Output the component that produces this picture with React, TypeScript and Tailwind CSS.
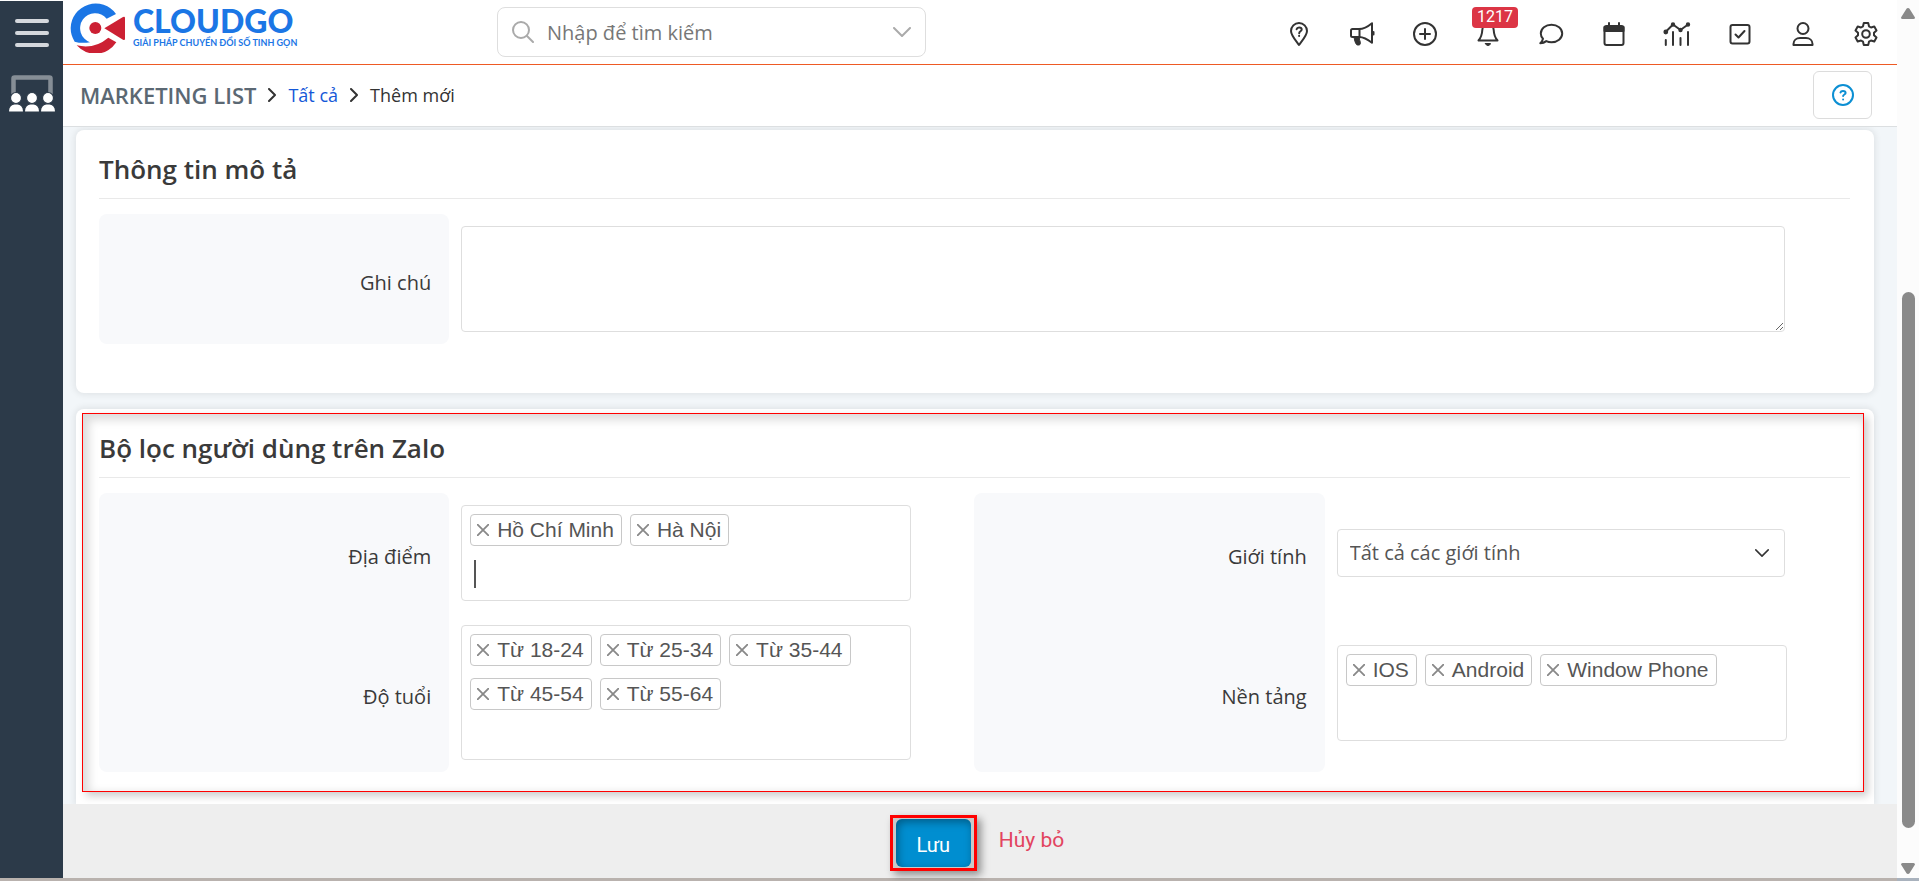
import type { ReactNode } from "react";

const stroke = {
  fill: "none",
  stroke: "currentColor",
  strokeWidth: 2,
  strokeLinecap: "round" as const,
  strokeLinejoin: "round" as const,
};

function Icon({ children }: { children: ReactNode }) {
  return (
    <svg className="size-6 overflow-visible" viewBox="0 0 24 24" {...stroke} aria-hidden="true">
      {children}
    </svg>
  );
}

const tools: { label: string; icon: ReactNode; badge?: string }[] = [
  {
    label: "Vị trí",
    icon: (
      <>
        <path d="M12 23C9.500 19.500 4 13.500 4 9a8 8 0 0 1 16 0c0 4.500-5.500 10.500-8 14Z" />
        <path d="M9.600 7.300c.3-1.300 1.200-1.800 2.500-1.800 1.500 0 2.600.8 2.600 2.100 0 1.700-2.500 1.700-2.500 3.600M12.100 13.800v.2" />
      </>
    ),
  },
  {
    label: "Chiến dịch",
    icon: (
      <>
        <path d="M2.500 7H9c5 0 9-2.500 13-5.800v19.600C18 17.500 14 15 9 15H2.500a1.500 1.500 0 0 1-1.500-1.500v-5A1.500 1.500 0 0 1 2.500 7Z" />
        <path d="M9.500 7v8" />
        <path d="M4 15h5.500c-1 3 2 5 .5 7.500-1 .8-2.500.6-3.200.3C5 21 4.500 18 4 15Z" fill="currentColor" strokeWidth="1" />
        <path d="M23.500 10v2.500" />
      </>
    ),
  },
  {
    label: "Tạo nhanh",
    icon: (
      <>
        <circle cx="12" cy="12" r="11" />
        <path d="M12 7v10M7 12h10" />
      </>
    ),
  },
  {
    label: "Thông báo",
    badge: "1217",
    icon: (
      <>
        <path d="M12 2C8 2 6.500 5 6.300 8c-.2 4-.8 7-3.800 10.500h19C18.500 15 17.900 12 17.700 8 17.500 5 16 2 12 2Z" />
        <path d="M9.500 21.500h5c-.3 1.300-1.200 2-2.500 2s-2.200-.7-2.500-2Z" fill="currentColor" strokeWidth="1" />
      </>
    ),
  },
  {
    label: "Tin nhắn",
    icon: (
      <path d="M12.500 2.800c6 0 10.700 3.900 10.700 8.700s-4.700 8.700-10.700 8.700c-1.900 0-3.700-.4-5.200-1.100-1.800 1.400-3.700 2-6 2.100 1.400-1.300 2.300-2.800 2.700-4.500-1.400-1.400-2.200-3.200-2.200-5.200 0-4.800 4.700-8.700 10.700-8.700Z" />
    ),
  },
  {
    label: "Lịch",
    icon: (
      <>
        <rect x="2.500" y="4" width="19" height="19" rx="2" />
        <path d="M2.500 5h19v4h-19Z" fill="currentColor" />
        <path d="M7 1v3M17 1v3" />
      </>
    ),
  },
  {
    label: "Báo cáo",
    icon: (
      <>
        <path d="M.5 10 8 2.500l7.500 5.500L23 2.500" />
        <circle cx=".8" cy="10" r="1.400" fill="currentColor" />
        <circle cx="8" cy="2.500" r="1.200" fill="currentColor" />
        <circle cx="15.500" cy="8" r="1.200" fill="currentColor" />
        <circle cx="23" cy="2.500" r="1.200" fill="currentColor" />
        <path d="M.8 18v5M8 10v13M15.500 16v7M23 10v13" />
      </>
    ),
  },
  {
    label: "Công việc",
    icon: (
      <>
        <rect x="2.500" y="3" width="19" height="18.500" rx="2" />
        <path d="m7.500 12.500 3 3 6-6.500" />
      </>
    ),
  },
  {
    label: "Tài khoản",
    icon: (
      <>
        <circle cx="12" cy="6.500" r="5.500" />
        <path d="M2.500 23v-1c0-3.600 2.900-6 6.500-6h6c3.600 0 6.500 2.400 6.500 6v1Z" />
      </>
    ),
  },
  {
    label: "Cài đặt",
    icon: (
      <>
        <circle cx="12" cy="12" r="3.800" />
        <path d="M9.800 1h4.400l.8 3.300 2 1.200 3.300-1 2.200 3.900-2.500 2.300v2.600l2.500 2.300-2.200 3.900-3.300-1-2 1.200-.8 3.300H9.800L9 19.700l-2-1.200-3.300 1-2.200-3.900L4 13.300v-2.600L1.500 8.400l2.200-3.900 3.300 1 2-1.200Z" />
      </>
    ),
  },
];

function Logo() {
  return (
    <a href="#" className="flex items-start gap-2 pt-[3px] pl-[7px] font-['Lato',sans-serif] text-[#1b76e5]">
      <svg className="h-[50px] w-[55px]" viewBox="0 0 165 150" aria-hidden="true">
        <path
          fill="#1b76e5"
          d="M138 33A75 75 0 0 0 2 75 75 75 0 0 0 14 116Q34 122 60 118A45 45 0 1 1 110 47Z"
        />
        <path fill="#cc2033" d="M20 127Q72 140 115 104L139 118A75 75 0 0 1 20 127Z" />
        <circle cx="76" cy="75" r="18" fill="#cc2033" />
        <path fill="#cc2033" d="M103 76 159 42q6-3 6 3v62q0 6-6 3Z" />
      </svg>
      <span className="flex flex-col">
        <span className="pt-px text-[32px] leading-[34px] font-black">CLOUDGO</span>
        <span className="text-[9px] leading-[10px] font-bold whitespace-nowrap">GIẢI PHÁP CHUYỂN ĐỔI SỐ TINH GỌN</span>
      </span>
    </a>
  );
}

function Chevron({ className }: { className: string }) {
  return (
    <svg className={className} viewBox="0 0 18 10" {...stroke} aria-hidden="true">
      <path d="m1 1 8 8 8-8" />
    </svg>
  );
}

function Separator() {
  return (
    <svg className="h-[14px] w-2" viewBox="0 0 8 14" {...stroke} aria-hidden="true">
      <path d="m1 1 6 6-6 6" />
    </svg>
  );
}

function Label({ id, children, shape = "" }: { id: string; children: ReactNode; shape?: string }) {
  return (
    <label
      htmlFor={id}
      className={`flex items-center justify-end bg-[#f8f9fb] pt-2 pr-[18px] text-xl text-[#3a3a3a] ${shape}`}
    >
      {children}
    </label>
  );
}

function TagField({ id, tags, size, focused }: { id: string; tags: string[]; size: string; focused?: boolean }) {
  return (
    <div
      className={`flex w-full flex-wrap content-start gap-x-2 gap-y-3 rounded border border-[#dedede] bg-white p-2 font-['Liberation_Sans',Arial,sans-serif] text-[21px] text-[#555] ${size}`}
    >
      {tags.map((tag) => (
        <span key={tag} className="flex h-8 items-center gap-2 rounded border border-[#c8c8c8] pr-[7px] pl-[6px]">
          <button type="button" aria-label={`Xóa ${tag}`} className="text-[#888]">
            <svg className="size-3" viewBox="0 0 12 12" fill="none" stroke="currentColor" strokeWidth="1.8" aria-hidden="true">
              <path d="M0 0 12 12M12 0 0 12" />
            </svg>
          </button>
          {tag}
        </span>
      ))}
      <span className="flex h-8 basis-full items-center pl-1">
        {focused && <span className="h-7 w-[2px] bg-[#555]" />}
        <input id={id} className="w-8 bg-transparent outline-none" />
      </span>
    </div>
  );
}

function Title({ children }: { children: ReactNode }) {
  return (
    <h2 className="h-16 border-b border-[#e9e9e9] pt-[18px] text-[26px] leading-8 font-semibold text-[#3a3a3a]">
      {children}
    </h2>
  );
}

export default function App() {
  return (
    <div className="flex min-h-screen bg-white font-['Open_Sans','Noto_Sans',sans-serif] text-[#333]">
      <nav className="mt-px flex w-[63px] shrink-0 flex-col items-center border-b-[3px] border-[#b9b2ae] bg-[#2c3a49] pt-[18px]">
        <button type="button" aria-label="Menu" className="text-[#d5d8dd]">
          <svg className="h-7 w-[34px]" viewBox="0 0 34 28" fill="currentColor" aria-hidden="true">
            <rect width="34" height="4" rx="2" />
            <rect y="12" width="34" height="4" rx="2" />
            <rect y="24" width="34" height="4" rx="2" />
          </svg>
        </button>
        <a href="#" aria-label="Khách hàng" className="mt-7">
          <svg className="h-[37px] w-[46px]" viewBox="0 0 46 37" aria-hidden="true">
            <path d="M4.500 19V3.500q0-1 1-1h35q1 0 1 1V19" fill="none" stroke="#868e96" strokeWidth="4.500" />
            <g fill="#fff" stroke="#2c3a49" strokeWidth="1.200">
              <circle cx="7" cy="23" r="5.500" />
              <circle cx="23" cy="23" r="5.500" />
              <circle cx="39" cy="23" r="5.500" />
              <path d="M-.5 37v-1.500c0-4 3-6.500 6-6.500h3c3 0 6 2.500 6 6.500V37ZM15.500 37v-1.500c0-4 3-6.500 6-6.500h3c3 0 6 2.500 6 6.500V37ZM31.500 37v-1.500c0-4 3-6.500 6-6.500h3c3 0 6 2.500 6 6.500V37Z" />
            </g>
          </svg>
        </a>
      </nav>

      <div className="flex min-w-0 flex-1 flex-col border-b-[3px] border-[#b9b2ae]">
        <header className="flex h-[65px] shrink-0 items-start border-b border-[#ee5a24]">
          <div className="w-[434px] shrink-0">
            <Logo />
          </div>
          <div className="mt-[7px] flex h-[50px] w-[429px] items-center gap-[13px] rounded-lg border border-[#dedede] px-[14px] text-[#aaa]">
            <svg className="size-[22px] shrink-0" viewBox="0 0 22 22" {...stroke} aria-hidden="true">
              <circle cx="9" cy="9" r="8" />
              <path d="m15 15 6 6" />
            </svg>
            <input
              aria-label="Nhập để tìm kiếm"
              placeholder="Nhập để tìm kiếm"
              className="min-w-0 flex-1 pt-px text-xl outline-none placeholder:text-[#777]"
            />
            <Chevron className="h-[10px] w-[18px] shrink-0" />
          </div>
          <div className="ml-auto flex h-full">
            {tools.map((tool) => (
              <button
                key={tool.label}
                type="button"
                aria-label={tool.label}
                className="relative flex w-[63px] items-start justify-center pt-[22px]"
              >
                <Icon>{tool.icon}</Icon>
                {tool.badge && (
                  <span className="absolute top-[7px] left-4 h-[21px] rounded bg-[#dc3545] px-[5px] font-['Roboto',sans-serif] text-base leading-5 text-white">
                    {tool.badge}
                  </span>
                )}
              </button>
            ))}
          </div>
        </header>

        <div className="flex h-[62px] shrink-0 items-center gap-3 border-b border-[#dcdfe1] pr-[25px] pb-px pl-[17px] text-[18px]">
          <h1 className="text-[22px] font-semibold text-[#5b6873]">MARKETING LIST</h1>
          <Separator />
          <a href="#" className="text-[#1458d8]">
            Tất cả
          </a>
          <Separator />
          <span>Thêm mới</span>
          <button
            type="button"
            aria-label="Trợ giúp"
            className="ml-auto flex h-12 w-[59px] items-center justify-center rounded-md border border-[#dcdcdc] text-[#0c8fd3]"
          >
            <svg className="size-[22px]" viewBox="0 0 22 22" {...stroke} aria-hidden="true">
              <circle cx="11" cy="11" r="10" />
              <path d="M8.500 8.500C8.800 7.300 9.700 7 11 7c1.500 0 2.600.6 2.600 1.900 0 1.700-2.500 1.500-2.500 3.200M11.100 15.400v.2" />
            </svg>
          </button>
        </div>

        <main className="flex flex-1 flex-col gap-4 overflow-hidden bg-[#f2f6f9] pt-[3px] pr-[23px] pl-[13px]">
          <section className="h-[263px] rounded-lg bg-white pt-[5px] pr-6 pl-[23px] shadow-[0_0_6px_2px_rgba(0,0,0,0.07)]">
            <Title>Thông tin mô tả</Title>
            <div className="mt-[15px] grid grid-cols-[20%_80%]">
              <Label id="note" shape="rounded-lg">
                Ghi chú
              </Label>
              <div className="py-3 pr-[65px] pl-3">
                <textarea id="note" className="block h-[106px] w-full rounded border border-[#dedede] p-2 text-xl outline-none" />
              </div>
            </div>
          </section>

          <section className="flex-1 rounded-t-lg bg-white pt-1 pr-[10px] pb-3 pl-[6px] shadow-[0_0_6px_2px_rgba(0,0,0,0.07)]">
            <div className="border border-[#f00] pr-[13px] pb-[19px] pl-4 shadow-[4px_4px_8px_rgba(0,0,0,0.2),inset_4px_4px_10px_2px_rgba(0,0,0,0.14)]">
              <Title>Bộ lọc người dùng trên Zalo</Title>
              <form className="mt-[15px] grid grid-cols-[20%_30%_20%_30%]">
                <Label id="place" shape="rounded-t-lg">
                  Địa điểm
                </Label>
                <div className="flex items-center py-3 pr-[63px] pl-3">
                  <TagField id="place" tags={["Hồ Chí Minh", "Hà Nội"]} size="h-24" focused />
                </div>
                <Label id="gender" shape="rounded-t-lg">
                  Giới tính
                </Label>
                <div className="grid items-center py-3 pr-[65px] pl-3">
                  <select
                    id="gender"
                    className="col-start-1 row-start-1 h-12 appearance-none rounded border border-[#dedede] bg-white px-3 text-xl text-[#555] outline-none"
                  >
                    <option>Tất cả các giới tính</option>
                  </select>
                  <Chevron className="pointer-events-none col-start-1 row-start-1 mr-4 h-2 w-[14px] justify-self-end" />
                </div>
                <Label id="age" shape="rounded-b-lg">
                  Độ tuổi
                </Label>
                <div className="flex items-center py-3 pr-[63px] pl-3">
                  <TagField
                    id="age"
                    tags={["Từ 18-24", "Từ 25-34", "Từ 35-44", "Từ 45-54", "Từ 55-64"]}
                    size="h-[135px]"
                  />
                </div>
                <Label id="platform" shape="rounded-b-lg">
                  Nền tảng
                </Label>
                <div className="flex items-center py-3 pr-[63px] pl-3">
                  <TagField id="platform" tags={["IOS", "Android", "Window Phone"]} size="h-24" />
                </div>
              </form>
            </div>
          </section>
        </main>

        <footer className="flex h-[74px] shrink-0 items-start justify-center gap-[22px] bg-[#eee] pt-[11px] pr-[6px] font-['Roboto',sans-serif] text-xl">
          <div className="border-[3px] border-[#f00] bg-[#c9c9c9] px-[3px] py-px shadow-[4px_4px_8px_rgba(0,0,0,0.4)]">
            <button
              type="button"
              className="h-12 w-[75px] rounded-md bg-[#008ed0] pt-1 text-white shadow-[inset_2px_3px_8px_rgba(0,0,0,0.35)]"
            >
              Lưu
            </button>
          </div>
          <button type="button" className="mt-[10px] h-8 text-[21px] text-[#e2445f]">
            Hủy bỏ
          </button>
        </footer>
      </div>

      <div className="flex w-[22px] shrink-0 flex-col items-center justify-between border-b-[3px] border-[#a9b2bd] bg-[#fcfcfc] pt-2 pb-1 text-[#8a8a8a]" aria-hidden="true">
        <svg className="h-[11px] w-[14px]" viewBox="0 0 14 11" fill="currentColor">
          <path d="M7 0q1 0 1.500.8L14 9.500q0 1.500-1.500 1.500h-11Q0 11 0 9.500L5.500.8Q6 0 7 0Z" />
        </svg>
        <div className="flex w-[13px] flex-1 flex-col pt-[273px] pb-[35px]">
          <div className="flex-1 rounded-full bg-[#8a8a8a]" />
        </div>
        <svg className="h-[11px] w-[14px]" viewBox="0 0 14 11" fill="currentColor">
          <path d="M7 11q1 0 1.500-.8L14 1.500Q14 0 12.500 0h-11Q0 0 0 1.500l5.500 8.700Q6 11 7 11Z" />
        </svg>
      </div>
    </div>
  );
}
